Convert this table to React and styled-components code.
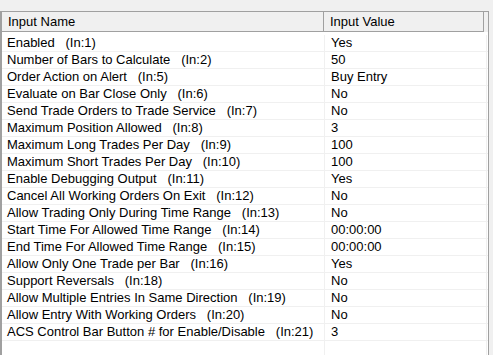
import React from 'react';
import styled, { createGlobalStyle } from 'styled-components';

const GlobalStyle = createGlobalStyle`
  html, body {
    margin: 0;
    padding: 0;
    background: #f0f0f0;
    overflow: hidden;
  }
  body {
    font-family: "Liberation Sans", Arial, sans-serif;
    font-size: 13px;
    color: #000;
  }
`;

const inputs = [
  ['Enabled', 1, 'Yes'],
  ['Number of Bars to Calculate', 2, '50'],
  ['Order Action on Alert', 5, 'Buy Entry'],
  ['Evaluate on Bar Close Only', 6, 'No'],
  ['Send Trade Orders to Trade Service', 7, 'No'],
  ['Maximum Position Allowed', 8, '3'],
  ['Maximum Long Trades Per Day', 9, '100'],
  ['Maximum Short Trades Per Day', 10, '100'],
  ['Enable Debugging Output', 11, 'Yes'],
  ['Cancel All Working Orders On Exit', 12, 'No'],
  ['Allow Trading Only During Time Range', 13, 'No'],
  ['Start Time For Allowed Time Range', 14, '00:00:00'],
  ['End Time For Allowed Time Range', 15, '00:00:00'],
  ['Allow Only One Trade per Bar', 16, 'Yes'],
  ['Support Reversals', 18, 'No'],
  ['Allow Multiple Entries In Same Direction', 19, 'No'],
  ['Allow Entry With Working Orders', 20, 'No'],
  ['ACS Control Bar Button # for Enable/Disable', 21, '3'],
];

const App = () => {
  return (
    <>
      <GlobalStyle />
      <Page>
        <Grid>
          <HeaderRow>
            <HeaderCell>Input Name</HeaderCell>
            <HeaderCell last>Input Value</HeaderCell>
          </HeaderRow>
          <Body>
            {inputs.map(([name, line, value]) => (
              <Row key={line}>
                <NameCell>{name + '   (In:' + line + ')'}</NameCell>
                <ValueCell>{value}</ValueCell>
              </Row>
            ))}
            <Filler>
              <NameCell />
              <ValueCell />
            </Filler>
          </Body>
        </Grid>
      </Page>
    </>
  );
};

export default App;

const Page = styled.div`
  height: 355px;
  padding-top: 11px;
  box-sizing: border-box;
`;

const Grid = styled.div`
  width: 489px;
  height: 360px;
  box-sizing: border-box;
  border-top: 1px solid #a0a0a0;
  border-left: 2px solid #a0a0a0;
  border-right: 1px solid #a0a0a0;
  background: #fff;
  display: flex;
  flex-direction: column;
`;

const HeaderRow = styled.div`
  display: grid;
  grid-template-columns: 322px 160px 4px;
  height: 20px;
  background: #f0f0f0;
`;

const HeaderCell = styled.div`
  grid-column: ${p => (p.last ? '2' : '1')};
  box-sizing: border-box;
  height: 20px;
  padding: 1px 0 0 6px;
  line-height: 18px;
  border-bottom: 1px solid #a0a0a0;
  border-right: 1px solid #a0a0a0;
  white-space: nowrap;
`;

const Body = styled.div`
  flex: 1;
  display: flex;
  flex-direction: column;
  padding-top: 3px;
`;

const Row = styled.div`
  display: grid;
  grid-template-columns: 323px 162px;
  height: 17px;
  box-sizing: border-box;
  border-bottom: 1px solid #f0f0f0;
`;

const Filler = styled(Row)`
  flex: 1;
  border-bottom: none;
`;

const NameCell = styled.div`
  padding-left: 5px;
  line-height: 16px;
  white-space: pre;
  overflow: hidden;
  border-right: 1px solid #f0f0f0;
`;

const ValueCell = styled.div`
  padding-left: 6px;
  line-height: 16px;
  white-space: pre;
  overflow: hidden;
  border-right: 1px solid #f0f0f0;
`;
